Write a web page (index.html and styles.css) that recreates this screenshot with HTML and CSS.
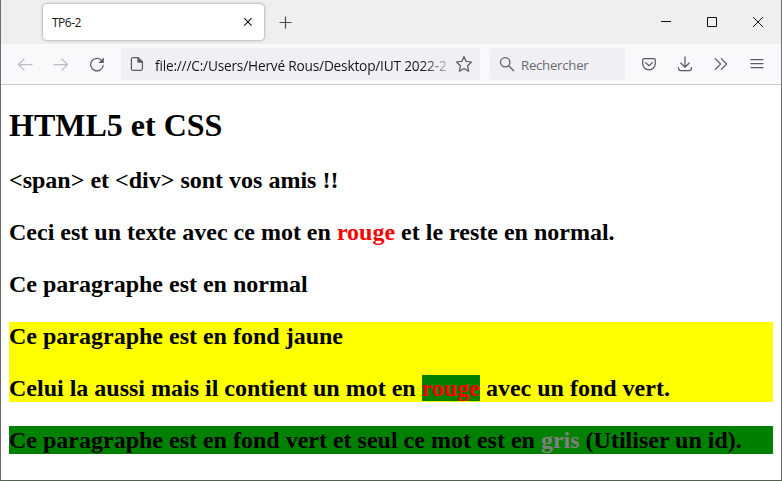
FILE: index.html
```html
<!DOCTYPE html>
<html lang="fr">
<head>
<meta charset="utf-8">
<title>TP6-2</title>
<link rel="stylesheet" href="styles.css">
</head>
<body>
<div class="window">
  <header class="tabs">
    <div class="tab"><span class="tab-title">TP6-2</span>
      <svg class="tab-close" width="10" height="10" viewBox="0 0 10 10"><path d="M1.2 1.2l7.4 7.4M8.6 1.2L1.2 8.6"/></svg>
    </div>
    <svg class="new-tab" width="13" height="13" viewBox="0 0 13 13"><path d="M6.5 .5v12M.5 6.5h12"/></svg>
    <div class="controls">
      <svg width="12" height="12" viewBox="0 0 12 12"><path d="M1 5.5h10"/></svg>
      <svg width="12" height="12" viewBox="0 0 12 12"><path d="M1.5 1.5h9v9h-9z"/></svg>
      <svg width="12" height="12" viewBox="0 0 12 12"><path d="M1 1l10 10M11 1L1 11"/></svg>
    </div>
  </header>
  <nav class="toolbar">
    <svg class="icon back off" width="16" height="16" viewBox="0 0 16 16"><path d="M15 8.500H1.500M7 3L1.500 8.500 7 14"/></svg>
    <svg class="icon forward off" width="16" height="16" viewBox="0 0 16 16"><path d="M1 8.500h13.500M9 3L14.500 8.500 9 14"/></svg>
    <svg class="icon reload" width="16" height="16" viewBox="0 0 16 16"><path d="M13 4.800A6.300 6.300 0 1 0 14.200 9.500"/><path class="solid" d="M14.800 1.500V7H9.300z"/></svg>
    <div class="address">
      <svg class="icon" width="16" height="16" viewBox="0 0 16 16"><path d="M4 1.600h5.200l4.200 4.200v7a1.600 1.600 0 0 1-1.600 1.600H4a1.600 1.600 0 0 1-1.600-1.600V3.200A1.600 1.600 0 0 1 4 1.600z"/><path d="M9 2v4h4"/><path class="solid" d="M9 2l4 4H9z"/></svg>
      <span class="url">file:///C:/Users/Hervé Rous/Desktop/IUT 2022-2</span>
      <svg class="icon star" width="18" height="18" viewBox="0 0 18 18"><path d="M9 1.500l2.200 4.900 5.300.6-3.900 3.700 1 5.500L9 13.500l-4.600 2.700 1-5.500L1.500 7l5.300-.6z"/></svg>
    </div>
    <div class="search">
      <svg class="icon" width="16" height="16" viewBox="0 0 16 16"><circle cx="6.200" cy="6.200" r="4.700"/><path d="M9.700 9.700l5 5"/></svg>
      <span class="hint">Rechercher</span>
    </div>
    <div class="actions">
      <svg class="icon" width="16" height="16" viewBox="0 0 16 16"><path d="M3.200 2.600h9.600a1.500 1.500 0 0 1 1.500 1.500v3.400a6.300 6.300 0 0 1-12.600 0V4.100a1.500 1.500 0 0 1 1.500-1.500z"/><path d="M4.600 6.600L8 9.700l3.400-3.100"/></svg>
      <svg class="icon" width="16" height="16" viewBox="0 0 16 16"><path d="M8 .8v10.400M3.800 7L8 11.200 12.200 7M1.600 11.500v1.300a1.700 1.700 0 0 0 1.700 1.700h9.400a1.700 1.700 0 0 0 1.700-1.700v-1.300"/></svg>
      <svg class="icon" width="16" height="16" viewBox="0 0 16 16"><path d="M2.200 2.600L7.600 8l-5.400 5.400M8.200 2.600L13.600 8l-5.400 5.400"/></svg>
      <svg class="icon" width="16" height="16" viewBox="0 0 16 16"><path d="M2 3.500h12M2 7.500h12M2 11.500h12"/></svg>
    </div>
  </nav>
  <main class="page">
    <h1>HTML5 et CSS</h1>
    <p>&lt;span&gt; et &lt;div&gt; sont vos amis !!</p>
    <p>Ceci est un texte avec ce mot en <span class="red">rouge</span> et le reste en normal.</p>
    <p>Ce paragraphe est en normal</p>
    <div class="yellow">
      <p>Ce paragraphe est en fond jaune</p>
      <p>Celui la aussi mais il contient un mot en <span class="red on-green">rouge</span> avec un fond vert.</p>
    </div>
    <p class="green">Ce paragraphe est en fond vert et seul ce mot est en <span id="gris">gris</span> (Utiliser un id).</p>
  </main>
</div>
</body>
</html>
```
FILE: styles.css
```css
* { box-sizing: border-box; }
body { margin: 0; background: #fff; }
svg { display: block; flex: none; fill: none; stroke: #111; stroke-width: 1; }

.window {
  height: 481px;
  overflow: hidden;
  border: solid #6c6b70;
  border-width: 0 1px 1px;
  border-bottom-color: #53614b;
  font-family: "Open Sans", "Noto Sans", sans-serif;
}

.tabs {
  display: flex;
  align-items: center;
  height: 44px;
  padding-left: 42px;
  background: #efefef;
}
.tab {
  display: flex;
  align-items: center;
  justify-content: space-between;
  width: 221px;
  height: 36px;
  padding: 0 11px 0 9px;
  border-radius: 4px;
  background: #fff;
  box-shadow: 0 0 3px rgba(0, 0, 0, .45);
}
.tab-title { font-size: 12px; letter-spacing: -.5px; color: #15141a; }
.tab-close { stroke-width: 1.1; }
.new-tab { margin-left: 15px; stroke: #4c4b52; stroke-width: 1.2; }
.controls { display: flex; gap: 34px; margin-left: auto; padding-right: 17px; }

.toolbar {
  display: flex;
  align-items: center;
  height: 41px;
  padding-left: 16px;
  border-bottom: 1px solid #cbcbcf;
  background: #f9f9fb;
}
.icon { stroke: #5b5b66; stroke-width: 1.25; stroke-linecap: round; stroke-linejoin: round; }
.off { stroke: #bdbdc2; }
.forward { margin-left: 20px; }
.reload { margin-left: 20px; }
.solid { fill: #5b5b66; stroke: none; }
.address, .search {
  display: flex;
  align-items: center;
  height: 32px;
  border-radius: 4px;
  background: #f0f0f4;
}
.address { width: 359px; margin-left: 16px; padding-left: 8px; }
.url {
  width: 293px;
  margin-left: 10px;
  padding-top: 2px;
  overflow: hidden;
  font-size: 13.7px;
  letter-spacing: -.2px;
  white-space: nowrap;
  color: #15141a;
  -webkit-mask-image: linear-gradient(to right, #000 91%, transparent 103%);
  mask-image: linear-gradient(to right, #000 91%, transparent 103%);
}
.star { margin-left: 7px; }
.search { width: 135px; margin-left: 10px; padding-left: 9px; }
.hint { margin-left: 6px; padding-top: 2px; font-size: 13.2px; letter-spacing: -.25px; color: #6b6b75; }
.actions { display: flex; gap: 20px; margin-left: 16px; }

.page {
  padding: 22px 8px 0;
  font: bold 24px/28px "Liberation Serif", "Times New Roman", serif;
  color: #000;
}
h1 { margin: 0 0 22px; font-size: 32px; line-height: 37px; }
p { margin: 0 0 24px; white-space: nowrap; }
.yellow { margin-bottom: 24px; background: #ff0; }
.yellow p:last-child { margin-bottom: 0; }
.red { color: #f00; }
.on-green, .green { background: #008000; }
#gris { color: #808080; }
```
